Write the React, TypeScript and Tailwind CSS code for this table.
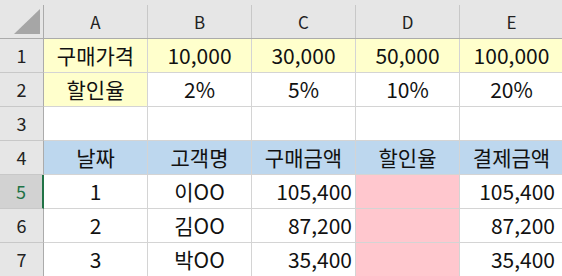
import React from 'react';

type Cell = {
    text?: string;
    bg?: string;
    align?: 'center' | 'right';
};

const columns = ['A', 'B', 'C', 'D', 'E'];

const rows: Cell[][] = [
    [
        { text: '구매가격', bg: 'bg-[#ffffcc]' },
        { text: '10,000', bg: 'bg-[#ffffcc]' },
        { text: '30,000', bg: 'bg-[#ffffcc]' },
        { text: '50,000', bg: 'bg-[#ffffcc]' },
        { text: '100,000', bg: 'bg-[#ffffcc]' },
    ],
    [{ text: '할인율', bg: 'bg-[#ffffcc]' }, { text: '2%' }, { text: '5%' }, { text: '10%' }, { text: '20%' }],
    [{}, {}, {}, {}, {}],
    [
        { text: '날짜', bg: 'bg-[#bdd7ee]' },
        { text: '고객명', bg: 'bg-[#bdd7ee]' },
        { text: '구매금액', bg: 'bg-[#bdd7ee]' },
        { text: '할인율', bg: 'bg-[#bdd7ee]' },
        { text: '결제금액', bg: 'bg-[#bdd7ee]' },
    ],
    [{ text: '1' }, { text: '이OO' }, { text: '105,400', align: 'right' }, { bg: 'bg-[#ffc7ce]' }, { text: '105,400', align: 'right' }],
    [{ text: '2' }, { text: '김OO' }, { text: '87,200', align: 'right' }, { bg: 'bg-[#ffc7ce]' }, { text: '87,200', align: 'right' }],
    [{ text: '3' }, { text: '박OO' }, { text: '35,400', align: 'right' }, { bg: 'bg-[#ffc7ce]' }, { text: '35,400', align: 'right' }],
];

const font = { fontFamily: '"Noto Sans CJK KR", "Noto Sans", sans-serif' };

export default function App() {
    return (
        <div className="w-[562px] h-[276px] overflow-hidden bg-white text-[#111]" style={font}>
            {/* column headers */}
            <div className="flex h-[39px] bg-[#e6e6e6] border-b border-[#ababab]">
                <div className="w-[44px] shrink-0 pt-[5px]">
                    <div className="h-full border-r border-[#ababab] relative">
                        <svg className="absolute left-0 top-0" width="43" height="34" viewBox="0 0 43 34">
                            <polygon points="14,29 40,29 40,4" fill="#a6a6a6" />
                        </svg>
                    </div>
                </div>
                {columns.map((c) => (
                    <div key={c} className="w-[104px] shrink-0 pt-[5px]">
                        <div className="h-full border-r border-[#c8c8c8] flex items-center justify-center text-[17px] leading-none text-[#222]">
                            {c}
                        </div>
                    </div>
                ))}
            </div>

            {rows.map((row, i) => {
                const selected = i === 4;
                return (
                    <div key={i} className="flex h-[34px]">
                        <div
                            className={`w-[44px] shrink-0 flex items-center justify-center text-[18px] border-b border-[#c8c8c8] ${
                                selected
                                    ? 'bg-[#d2d2d2] text-[#217346] border-r-2 border-r-[#217346]'
                                    : 'bg-[#e6e6e6] text-[#222] border-r border-r-[#ababab]'
                            }`}
                        >
                            {i + 1}
                        </div>
                        {row.map((cell, j) => (
                            <div
                                key={j}
                                className={`w-[104px] shrink-0 flex items-center text-[21px] leading-none border-r border-b border-[#d4d4d4] ${
                                    cell.bg ?? 'bg-white'
                                } ${cell.align === 'right' ? (j === 4 ? 'justify-end pr-[8px]' : 'justify-end pr-[3px]') : 'justify-center'}`}
                            >
                                {cell.text}
                            </div>
                        ))}
                    </div>
                );
            })}
        </div>
    );
}
